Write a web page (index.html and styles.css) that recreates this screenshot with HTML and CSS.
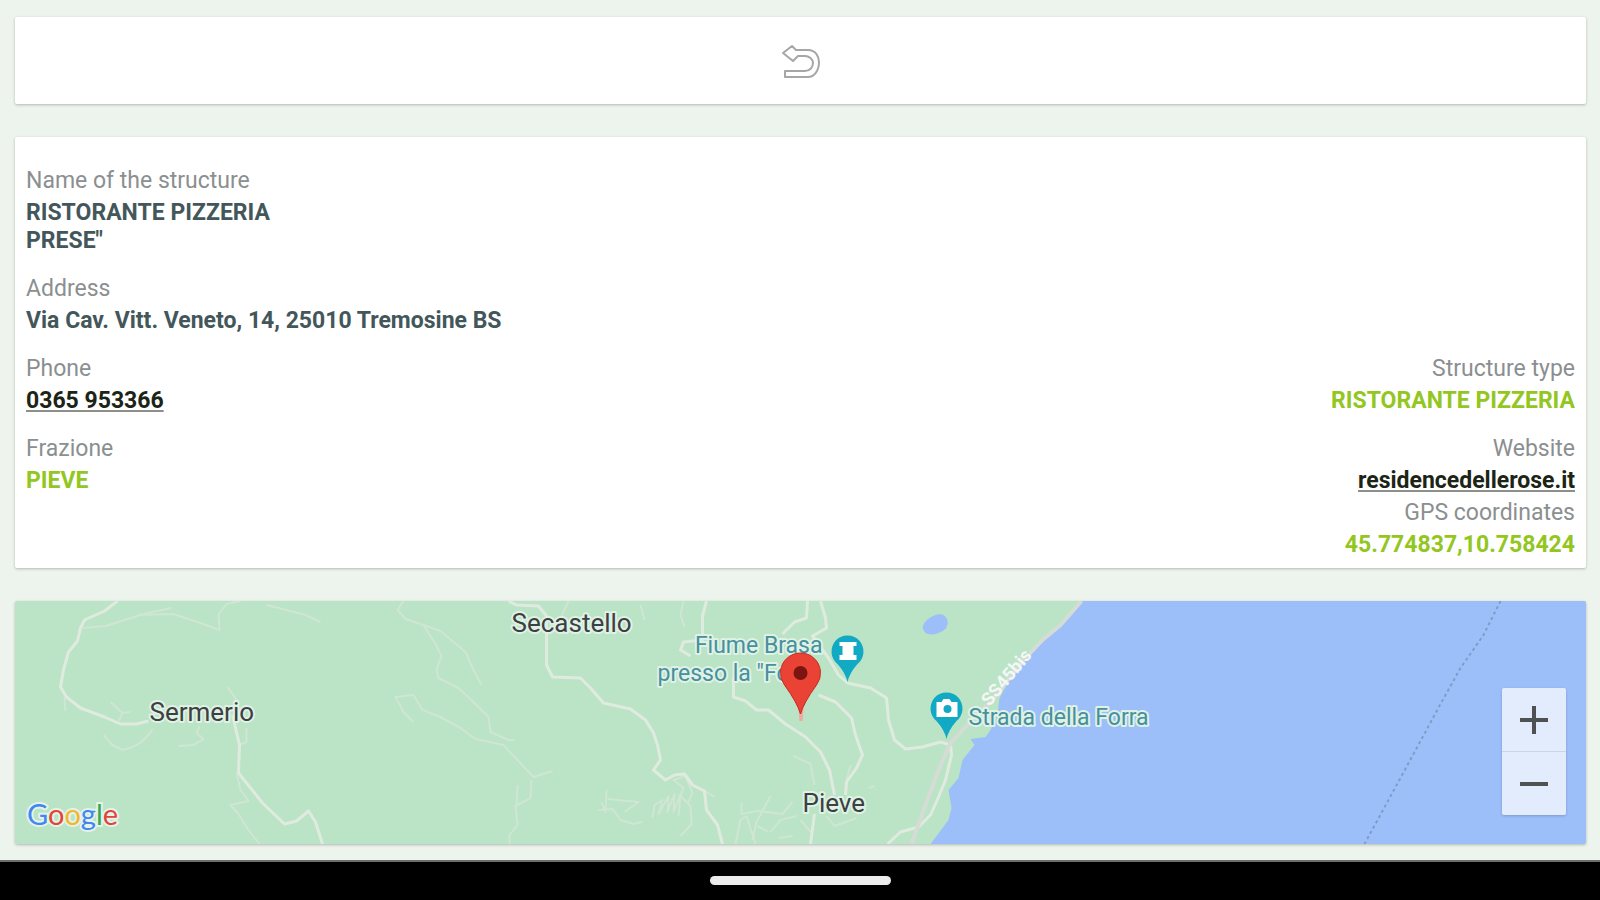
FILE: index.html
```html
<!DOCTYPE html>
<html lang="en">
<head>
  <meta charset="UTF-8">
  <meta name="viewport" content="width=device-width, initial-scale=1.0">
  <title>Ristorante Pizzeria</title>
  <link rel="stylesheet" href="styles.css">
</head>
<body>
  <main class="page">
    <!-- Back -->
    <div class="card toolbar">
      <button class="back-button" type="button" aria-label="Back">
        <svg width="40" height="38" viewBox="0 0 40 38" fill="none" stroke="#a6a6a6" stroke-width="2" stroke-linejoin="round">
          <path d="M2 11 L11 4 L15 8 H27 C35 8 38 15 38 20 C38 29 33 35 27 35 H4 V29 H24 C29 29 32 25 32 21 C32 17 28 14 24 14 H17 L12 19 Z"/>
        </svg>
      </button>
    </div>

    <!-- Structure details -->
    <div class="card details">
      <div class="field wide">
        <p class="label">Name of the structure</p>
        <p class="value">RISTORANTE PIZZERIA<br>PRESE"</p>
      </div>
      <div class="field wide">
        <p class="label">Address</p>
        <p class="value">Via Cav. Vitt. Veneto, 14, 25010 Tremosine BS</p>
      </div>
      <div class="field">
        <p class="label">Phone</p>
        <a class="value link" href="tel:0365953366">0365 953366</a>
      </div>
      <div class="field right">
        <p class="label">Structure type</p>
        <p class="value green">RISTORANTE PIZZERIA</p>
      </div>
      <div class="field">
        <p class="label">Frazione</p>
        <p class="value green">PIEVE</p>
      </div>
      <div class="field right">
        <p class="label">Website</p>
        <a class="value link" href="#">residencedellerose.it</a>
        <p class="label">GPS coordinates</p>
        <p class="value green">45.774837,10.758424</p>
      </div>
    </div>

    <!-- Map -->
    <div class="map">
      <svg class="map-canvas" viewBox="14 11 1572 243" preserveAspectRatio="xMidYMid slice">
        <rect class="land" x="14" y="11" width="1572" height="243"/>
        <path class="water" d="M1082 11 L1060 37 L1041 52 L1030 65 L1010 88 L999 108 L997 125 L990 140 L985 147 L970 149 L974 155 L962 170 L958 188 L948 200 L951 218 L948 230 L930 254 H1586 V11 Z"/>
        <path class="water" d="M922 37 Q924 29 935 25 Q944 22 947 30 Q949 39 938 43 Q924 48 922 37 Z"/>

        <g class="road minor">
          <path d="M82 38 L105 36 L140 25 L173 24 L200 33 L219 40 L218 24 L226 14 L240 11"/>
          <path d="M138 25 L171 18 M266 15 L290 21 L305 25 L320 32"/>
          <path d="M110 112 L122 123 L130 122 M122 123 L118 131 M64 107 L65 121"/>
          <path d="M103 145 L112 155 L122 160 Q142 156 152 139"/>
          <path d="M178 156 L193 155 L203 149 L196 143 L199 136"/>
          <path d="M227 97 L237 111 V125 M238 155 L246 152 V138"/>
          <path d="M236 183 L240 200 L248 211 L230 215 L238 224 L248 240 L259 254"/>
          <path d="M403 11 L397 20 L405 29 L423 35 L435 54 L441 66 L436 80 L438 88 L458 98 L475 114 L488 127 L490 142 L508 150 H514"/>
          <path d="M423 35 L440 41 L465 62 L473 80 L481 95"/>
          <path d="M413 132 L403 122 L395 107 L413 105 L422 120 L440 127 L460 138 L475 149 L503 155 L515 168 L533 187 L552 181"/>
          <path d="M531 190 L530 208 L515 216 L517 235 L509 245 V254 M517 195 L516 216"/>
          <path d="M568 11 L561 26 M640 15 L644 30 M683 11 L680 25 L684 37"/>
          <path d="M606 200 L605 222 L601 212 M598 220 L612 219 L620 230 L633 234 L642 232 M607 209 L638 212 L624 222"/>
          <path d="M652 228 L654 215 L662 210 L658 224 L668 206 L667 222 L674 204 L673 222 L680 204 L678 226"/>
          <path d="M685 186 L673 190 L683 198 L680 206 L690 216 L691 234 L680 246 M684 184 L692 203 L688 212"/>
          <path d="M704 201 L714 207 M735 254 L740 230 L746 226 L755 254 M741 225 V213"/>
          <path d="M752 250 L756 232 L770 206 M741 224 L757 221 L782 224 L792 212 M757 236 L768 242"/>
          <path d="M793 166 L810 174 L814 195 M850 175 L846 190 M868 198 L874 196"/>
          <path d="M770 242 L780 230 L796 226 M800 230 L812 244 M826 226 L834 236 L856 228 M778 248 L792 246"/>
        </g>

        <g class="road">
          <path d="M117 11 L104 21 L84 30 L80 38 L77 51 L68 62 L63 80 L60 97 L66 107 L80 118 L104 127 L120 134 H136 L148 131"/>
          <path d="M232 125 L239 155 L238 183 L262 213 L284 234 L296 231 L308 221 L315 232 L322 254"/>
          <path d="M508 11 L516 15 L538 16 L546 26 V75 L552 87 L580 88 L590 98 L603 113 L630 119 L645 130 L653 143 L657 155 L660 170 L653 180 L665 190 L674 185 L684 184 L692 195 L704 201 L706 220 L717 235 L722 254"/>
          <path d="M706 11 L702 26 V50 L683 52 L680 60 L690 66"/>
          <path d="M733 87 V107 L745 111 L756 120 L768 120 L785 134 L805 147 L820 162 L829 180 L834 205"/>
          <path d="M818 105 L835 112 L851 128 L855 145 L862 165 L856 178 L846 192 L845 205"/>
          <path d="M807 11 L806 28 L794 32 L782 44"/>
          <path d="M820 11 L825 28 L826 38 L812 46 L828 68 L838 85 L847 93 L870 98 L886 108 L888 130 L894 150 L905 159 L922 157 L940 152 L950 155 L951 165 L945 190 L938 207 L930 225 L918 237 L900 242 L887 254"/>
          <path d="M814 224 L810 254"/>
        </g>
        <path class="road highway" d="M1081 11 L1060 35 L1042 50 L1025 68 L990 112 L965 137 L950 153 L940 175 L925 215 L911 254"/>
        <path class="border" d="M1500 11 L1483 45 L1460 78 L1440 114 L1400 188 L1364 254"/>

        <text class="road-name" transform="translate(989 117) rotate(-50)">SS45bis</text>
        <text class="town" x="149" y="131">Sermerio</text>
        <text class="town" x="511" y="42">Secastello</text>
        <text class="town" x="802" y="222">Pieve</text>
        <text class="poi" x="822" y="63" text-anchor="end">Fiume Brasa</text>
        <text class="poi" x="657" y="91">presso la "Fo</text>
        <text class="poi" x="968" y="135">Strada della Forra</text>

        <!-- pins -->
        <g class="pin">
          <path d="M847 92 Q845 83 837 74 A16 16 0 1 1 857 74 Q849 83 847 92 Z"/>
          <path class="glyph" d="M839 52 H856 V56 H853 V65 H856 V70 H839 V65 H842 V56 H839 Z"/>
        </g>
        <g class="pin">
          <path d="M946 149 Q944 140 936 131 A16 16 0 1 1 956 131 Q948 140 946 149 Z"/>
          <path class="glyph" d="M936 112 H941 L943 109 H949 L951 112 H957 V127 H936 Z"/>
          <circle cx="947" cy="119" r="4"/>
        </g>
        <path class="marker-tail" d="M798 118 H803 L802 131 H799 Z"/>
        <path class="marker" d="M800 124 Q797 113 784 95 A20 20 0 1 1 816 95 Q803 113 800 124 Z"/>
        <circle class="marker-dot" cx="800" cy="83" r="7"/>
      </svg>

      <a class="google" href="#"><span class="b">G</span><span class="r">o</span><span class="y">o</span><span class="b">g</span><span class="g">l</span><span class="r">e</span></a>

      <div class="zoom">
        <button type="button" aria-label="Zoom in">
          <svg width="28" height="28" viewBox="0 0 28 28"><path d="M0 14 H28 M14 0 V28"/></svg>
        </button>
        <button type="button" aria-label="Zoom out">
          <svg width="28" height="28" viewBox="0 0 28 28"><path d="M0 14 H28"/></svg>
        </button>
      </div>
    </div>
  </main>

  <div class="nav-bar">
    <div class="nav-handle"></div>
  </div>
</body>
</html>
```

FILE: styles.css
```css
* {
  box-sizing: border-box;
}
body {
  margin: 0;
  min-height: 100vh;
  display: flex;
  flex-direction: column;
  font-family: Roboto, "Liberation Sans", sans-serif;
  background-color: #edf3ed;
}
p {
  margin: 0;
}
.page {
  flex: 1;
  display: flex;
  flex-direction: column;
  gap: 33px;
  padding: 17px 14px 16px 15px;
}
.card,
.map {
  border-radius: 2px;
  box-shadow: 0 1px 3px rgba(0, 0, 0, 0.25);
}
.card {
  background: white;
}
.toolbar {
  display: flex;
  justify-content: center;
  padding: 24px 23px 23px;
}
.back-button {
  display: flex;
  padding: 1px;
  border: none;
  background: none;
  cursor: pointer;
}
.details {
  display: grid;
  grid-template-columns: 1fr 1fr;
  row-gap: 20px;
  padding: 30px 11px 9px;
}
.field {
  display: flex;
  flex-direction: column;
  align-items: flex-start;
  gap: 4px;
  font-size: 23px;
  line-height: 28px;
}
.wide {
  grid-column: span 2;
}
.right {
  align-items: flex-end;
}
.label {
  color: #8b8f90;
}
.value {
  color: #43575b;
  font-weight: 700;
}
.green {
  color: #93c61f;
}
.link {
  color: #1c2416;
  text-decoration-color: #8c9088;
  text-decoration-thickness: 2px;
  text-underline-offset: 2px;
}

/* map */
.map {
  position: relative;
  height: 243px;
  overflow: hidden;
}
.map-canvas {
  display: block;
  width: 100%;
  height: 100%;
}
.land {
  fill: #bbe3c6;
}
.water {
  fill: #9dbff9;
}
.road {
  fill: none;
  stroke: #e0ebe0;
  stroke-width: 3;
  stroke-linejoin: round;
}
.minor {
  stroke: #cfe6d2;
  stroke-width: 2;
}
.highway {
  stroke: #d5dcd5;
  stroke-width: 4;
}
.border {
  fill: none;
  stroke: #7f9cc9;
  stroke-width: 2;
  stroke-dasharray: 3 3;
}
.town,
.poi {
  stroke: #dff2e4;
  stroke-width: 4;
  stroke-linejoin: round;
  paint-order: stroke;
}
.town {
  font-size: 26px;
  fill: #3c4043;
}
.poi {
  font-size: 23px;
  fill: #4690a0;
}
.road-name {
  font-size: 18px;
  font-weight: 700;
  fill: #f4f8f4;
}
.pin {
  fill: #12a9c4;
}
.glyph {
  fill: white;
}
.marker {
  fill: #ea4335;
  stroke: #c9291e;
}
.marker-tail {
  fill: #f3a6a2;
}
.marker-dot {
  fill: #7a150f;
}
.google {
  position: absolute;
  left: 12px;
  bottom: 12px;
  font-family: Lato, sans-serif;
  font-size: 29px;
  line-height: 36px;
  text-decoration: none;
  -webkit-text-stroke: 4px #e3f3e7;
  paint-order: stroke;
}
.b {
  color: #4285f4;
}
.r {
  color: #e2443a;
}
.y {
  color: #f5b52e;
}
.g {
  color: #3aa757;
}
.zoom {
  position: absolute;
  right: 20px;
  bottom: 29px;
  display: flex;
  flex-direction: column;
  width: 64px;
  border-radius: 2px;
  background: #e2ecfd;
  box-shadow: 0 1px 3px rgba(0, 0, 0, 0.2);
}
.zoom button {
  display: flex;
  justify-content: center;
  padding: 18px 0 17px;
  border: none;
  background: none;
  cursor: pointer;
}
.zoom button + button {
  border-top: 1px solid #c8d6ec;
}
.zoom path {
  stroke: #4f5152;
  stroke-width: 4;
}

/* system navigation */
.nav-bar {
  display: flex;
  justify-content: center;
  padding: 14px 0 15px;
  background: black;
  border-top: 2px solid #6b6e6b;
}
.nav-handle {
  width: 181px;
  height: 9px;
  border-radius: 5px;
  background: #ececec;
}
```
